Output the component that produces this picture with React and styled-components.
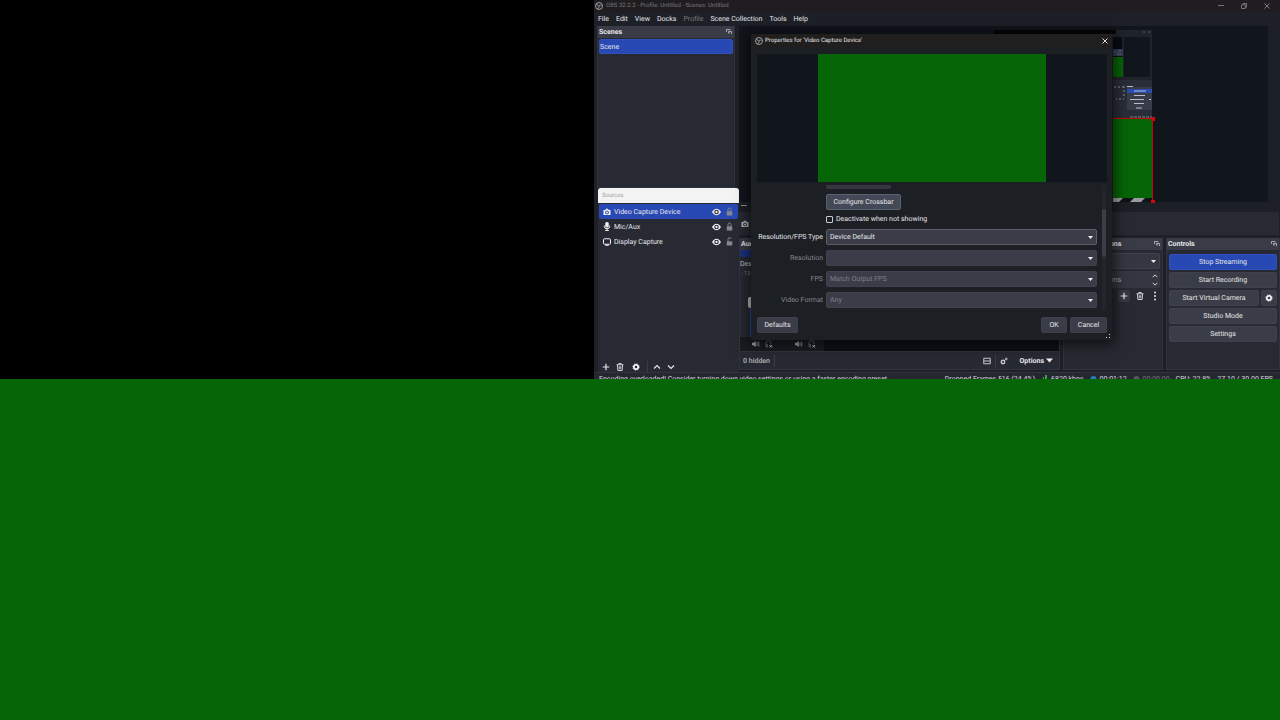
import React from "react";
import styled, { createGlobalStyle } from "styled-components";

const Global = createGlobalStyle`
  *, *::before, *::after { box-sizing: border-box; }
  body { margin: 0; background: #066506; text-rendering: geometricPrecision; }
  body, button, input, select {
    font-family: Roboto, "Open Sans", sans-serif;
    font-size: 7px;
    line-height: 10px;
    color: #e6e6ea;
    text-rendering: geometricPrecision;
  }
  h1, h2, p, ul { margin: 0; padding: 0; font-size: 7px; line-height: 10px; }
  ul { list-style: none; }
`;

const Page = styled.div`
  min-height: 100vh;
  display: flex;
  flex-direction: column;
  background: #066506;
`;

const Desktop = styled.div`
  display: grid;
  grid-template-columns: minmax(0, 594fr) minmax(686px, 686fr);
  background: #000;
`;

const Window = styled.main`
  grid-column: 2;
  position: relative;
  display: flex;
  flex-direction: column;
  background: #1d2026;
  overflow: hidden;
`;

const TitleBar = styled.header`
  display: flex;
  align-items: center;
  height: 12px;
  padding: 0 9px 0 1px;
  gap: 3px;
  background: #1f1d1f;
  color: #77767a;
`;

const WindowTitle = styled.h1`
  flex: 1;
  font-weight: 400;
  font-size: 6px;
`;

const WindowButtons = styled.div`
  display: flex;
  gap: 15px;
`;

const IconButton = styled.button`
  display: inline-flex;
  align-items: center;
  justify-content: center;
  flex: none;
  width: ${(p) => p.$w || 8}px;
  height: ${(p) => p.$h || 8}px;
  padding: 0;
  border: 0;
  border-radius: 2px;
  background: ${(p) => p.$bg || "transparent"};
  color: ${(p) => p.$color || "#e6e6ea"};
`;

const MenuBar = styled.nav`
  display: flex;
  align-items: center;
  height: 13px;
  padding-left: 4px;
  gap: 7px;
`;

const MenuItem = styled.button`
  padding: 0;
  border: 0;
  background: none;
  color: #e6e6ea;
  &:disabled { color: #77797f; }
`;

const Workspace = styled.div`
  display: flex;
  height: 347px;
`;

const LeftColumn = styled.div`
  flex: none;
  width: 145px;
  padding: 1px 0 0 3px;
`;

const RightColumn = styled.div`
  flex: 1;
  min-width: 0;
  display: flex;
  flex-direction: column;
`;

const Dock = styled.section`
  display: flex;
  flex-direction: column;
  min-width: 0;
  flex: ${(p) => p.$flex || "none"};
  background: #272a32;
  border: 1px solid #30333c;
  border-top: 0;
  overflow: hidden;
`;

const ScenesDock = styled(Dock)`
  width: 138px;
  height: 162px;
`;

const SourcesDock = styled(Dock)`
  width: 141px;
  height: 184px;
  margin-left: 1px;
  border: 0;
  border-radius: 3px 3px 0 0;
`;

const DockHeader = styled.header`
  display: flex;
  flex: none;
  align-items: center;
  justify-content: space-between;
  height: 12px;
  padding: 0 2px 0 1px;
  background: #393c46;
`;

const DockTitle = styled.h2`
  font-weight: 700;
  font-size: 7px;
  white-space: nowrap;
`;

const FloatingHeader = styled.header`
  display: flex;
  flex: none;
  align-items: center;
  height: 15px;
  padding-left: 4px;
  background: #f3f3f4;
  color: #a3a3a5;
  h2 { font-weight: 400; font-size: 6px; }
`;

const List = styled.ul`
  flex: 1;
  padding: 1px;
`;

const Item = styled.li`
  display: flex;
  align-items: center;
  height: 15px;
  padding: 0 5px 0 4px;
  gap: 3px;
  background: ${(p) => (p.$selected ? "#2848b4" : "transparent")};
  border-radius: 2px;
`;

const SceneItem = styled(Item)`
  padding-left: 0;
  border: 1px solid #3250bc;
`;

const ItemName = styled.span`
  flex: 1;
`;

const ItemActions = styled.span`
  display: flex;
  align-items: center;
  gap: 5px;
`;

const Toolbar = styled.div`
  display: flex;
  align-items: center;
  flex: none;
  height: 11px;
  padding: 0 3px;
  gap: 4px;
`;

const Divider = styled.span`
  width: 1px;
  height: 12px;
  background: #3a3d46;
`;

const Preview = styled.div`
  height: 186px;
  padding: 1px 12px 0 0;
  display: flex;
  flex-direction: column;
  background: #1c1f25;
`;

const PreviewCanvas = styled.div`
  flex: 1;
  display: flex;
  justify-content: flex-end;
  padding-right: 114px;
  background: #11151c;
`;

const ZoomBar = styled.div`
  display: flex;
  height: 9px;
  padding-left: 1px;
`;

const ContextBar = styled.div`
  display: flex;
  align-items: center;
  height: 23px;
  margin: 1px 1px 3px 0;
  padding-left: 2px;
  background: #272a32;
`;

const DockRow = styled.div`
  display: flex;
  flex: 1;
  gap: 3px;
  min-height: 0;
  padding-bottom: 2px;
`;

const MixerBody = styled.div`
  flex: 1;
  display: flex;
  flex-direction: column;
`;

const MixerTab = styled.div`
  height: 7px;
  background: #1d3180;
`;

const MixerName = styled.p`
  padding-top: 2px;
  color: #c4c5ca;
  white-space: nowrap;
`;

const MixerLevel = styled.p`
  flex: 1;
  padding-left: 2px;
  color: #777a83;
  font-size: 6px;
`;

const Fader = styled.div`
  display: flex;
  flex-direction: column;
  align-items: center;
  width: 22px;
  height: 40px;
`;

const FaderKnob = styled.span`
  width: 6px;
  height: 11px;
  border-radius: 2px;
  background: #c6c7cc;
`;

const FaderTrack = styled.span`
  width: 2px;
  flex: 1;
  background: #284cb8;
`;

const MuteRow = styled.div`
  display: flex;
  align-items: center;
  height: 14px;
  padding-left: 12px;
  gap: 5px;
  color: #a0a1a7;
  background: #191c21;
`;

const MuteGap = styled.span`
  width: 12px;
`;

const MeterEnd = styled.span`
  flex: 1;
  align-self: stretch;
  margin-left: 3px;
  background: #0e1115;
`;

const MixerFooter = styled.footer`
  display: flex;
  align-items: center;
  height: 18px;
  padding: 0 6px 0 3px;
  gap: 4px;
  border-top: 1px solid #30333c;
  color: #aaabb0;
  font-weight: 600;
`;

const Spacer = styled.span`
  flex: 1;
`;

const OptionsButton = styled.button`
  display: flex;
  align-items: center;
  gap: 2px;
  padding: 0;
  border: 0;
  background: none;
  font-weight: 700;
  margin-left: 8px;
`;

const TransitionBody = styled.div`
  display: flex;
  flex-direction: column;
  gap: 2px;
  padding: 3px 2px;
`;

const TransitionTools = styled.div`
  display: flex;
  align-items: center;
  justify-content: flex-end;
  gap: 5px;
`;

const ControlBody = styled.div`
  display: flex;
  flex-direction: column;
  gap: 2px;
  padding: 4px 2px;
`;

const ControlRow = styled.div`
  display: flex;
  gap: 2px;
`;

const Button = styled.button`
  flex: ${(p) => (p.$grow ? "1" : "none")};
  display: flex;
  align-items: center;
  justify-content: center;
  width: ${(p) => (p.$w ? p.$w + "px" : "auto")};
  height: 16px;
  padding: 0;
  border: 1px solid ${(p) => (p.$active ? "#2f50be" : p.$light ? "#596070" : "#3e414c")};
  border-radius: 2px;
  background: ${(p) => (p.$active ? "#2848b4" : p.$light ? "#434956" : "#3a3d47")};
`;

const StatusBar = styled.footer`
  display: flex;
  height: 7px;
  padding: 1px 7px 0 5px;
  overflow: hidden;
  white-space: nowrap;
  background: #24272e;
  border-top: 1px solid #30333c;
`;

const StatusItem = styled.span`
  display: flex;
  gap: 3px;
  margin-left: ${(p) => p.$gap || 0}px;
  color: ${(p) => (p.$dim ? "#777a80" : "#dcdde0")};
  svg { flex: none; }
`;

const Backdrop = styled.section`
  flex: 1;
  min-height: 341px;
  background: #066506;
`;

const Dialog = styled.section`
  position: absolute;
  top: 34px;
  right: 168px;
  width: 361px;
  display: flex;
  flex-direction: column;
  background: #1c1f24;
  box-shadow: 0 2px 12px 3px rgba(0, 0, 0, 0.6);
`;

const DialogTitle = styled.header`
  display: flex;
  align-items: center;
  height: 13px;
  padding: 0 3px 0 4px;
  gap: 2px;
  background: #201f1e;
  h2 { flex: 1; font-weight: 400; font-size: 6px; }
`;

const DevicePreview = styled.div`
  display: flex;
  justify-content: center;
  height: 128px;
  margin: 7px 5px 3px 6px;
  background: #11151c;
`;

const DeviceFrame = styled.div`
  width: 228px;
  background: #066506;
`;

const FormArea = styled.div`
  display: flex;
  height: 125px;
  padding: 0 6px;
`;

const Form = styled.form`
  flex: 1;
  display: flex;
  flex-direction: column;
`;

const Indent = styled.div`
  display: flex;
  align-items: center;
  padding-left: 69px;
  margin-bottom: ${(p) => p.$after}px;
`;

const CutButton = styled.span`
  width: 65px;
  height: 4px;
  border-radius: 0 0 2px 2px;
  background: #343741;
`;

const CheckLabel = styled.label`
  display: flex;
  align-items: center;
  gap: 3px;
`;

const CheckBox = styled.input`
  appearance: none;
  width: 7px;
  height: 7px;
  margin: 0;
  border: 1px solid #c8cbd2;
  border-radius: 1px;
`;

const Fields = styled.div`
  display: flex;
  flex-direction: column;
  gap: 5px;
`;

const Field = styled.div`
  display: grid;
  grid-template-columns: 66px 1fr;
  gap: 3px;
  align-items: center;
`;

const FieldLabel = styled.label`
  text-align: right;
  white-space: nowrap;
  color: ${(p) => (p.$dim ? "#85878d" : "#e6e6ea")};
`;

const SelectWrap = styled.div`
  position: relative;
  display: flex;
  svg { position: absolute; right: 4px; top: 6px; pointer-events: none; }
`;

const Select = styled.select`
  appearance: none;
  flex: 1;
  height: 16px;
  padding: 0 3px;
  border: 1px solid ${(p) => (p.disabled || p.$flat ? "#3f424d" : "#5a5d68")};
  border-radius: 2px;
  background: ${(p) => (p.$flat ? "#343741" : "#3a3d47")};
  opacity: 1;
  &:disabled { color: #7c7f88; }
`;

const SpinWrap = styled.div`
  display: flex;
  height: 17px;
  border-radius: 2px;
  background: #343741;
`;

const SpinInput = styled.input`
  flex: 1;
  min-width: 0;
  border: 0;
  background: none;
  color: #a0a1a7;
  padding: 0 2px 0 32px;
`;

const SpinButtons = styled.div`
  display: flex;
  flex-direction: column;
  justify-content: center;
  padding-right: 1px;
`;

const ScrollTrack = styled.div`
  width: 4px;
  margin-left: 5px;
  padding-top: 24px;
  background: #22252b;
`;

const ScrollThumb = styled.div`
  height: 48px;
  border-radius: 2px;
  background: #3b3e48;
`;

const DialogFooter = styled.footer`
  display: flex;
  gap: 3px;
  padding: 7px 5px 0 6px;
`;

const Grip = styled.div`
  display: flex;
  justify-content: flex-end;
  height: 7px;
  padding: 1px 1px 0 0;
`;

const Logo = () => (
  <svg width="8" height="8" viewBox="0 0 16 16" fill="none" stroke="#dedee2" strokeWidth="1.3">
    <circle cx="8" cy="8" r="7" />
    <path d="M4 3.5c-.2 2.4 1 4 3.3 4.3M12.8 7c-2-1.4-4-1-5 1M5 13c2.4-.6 3.8-2.4 3-5" />
  </svg>
);
const Popout = () => (
  <svg width="6" height="6" viewBox="0 0 12 12" fill="none" stroke="#bfc0c6" strokeWidth="1.600">
    <path d="M1 6V1h7v2M5 5h6v5M5 5v3h3" />
  </svg>
);
const Eye = () => (
  <svg width="9" height="8" viewBox="0 0 18 16">
    <path d="M0 8C3 3 6 1.500 9 1.500S15 3 18 8c-3 5-6 6.500-9 6.500S3 13 0 8Z" fill="#f0f0f4" />
    <circle cx="9" cy="8" r="4.500" fill="#272a32" />
    <circle cx="9" cy="8" r="2.300" fill="#f0f0f4" />
  </svg>
);
const Lock = ({ open }) => (
  <svg width="7" height="9" viewBox="0 0 14 18">
    <path d={open ? "M4 9V5a3 3 0 0 1 6-1" : "M4 9V5a3 3 0 0 1 6 0v4"} fill="none" stroke="#85878f" strokeWidth="2" />
    <rect x="1.500" y="8.500" width="11" height="8.500" rx="1" fill="#85878f" />
  </svg>
);
const Camera = ({ color = "#f0f0f4", hole = "#2848b4" }) => (
  <svg width="8" height="8" viewBox="0 0 16 16">
    <path d="M1 4h3.500l1.500-2.500h4L11.500 4H15v10H1Z" fill={color} />
    <circle cx="8" cy="8.800" r="3.700" fill={hole} />
    <circle cx="8" cy="8.800" r="2" fill={color} />
  </svg>
);
const Mic = () => (
  <svg width="8" height="9" viewBox="0 0 16 18" fill="#f0f0f4">
    <rect x="4.500" y="0" width="7" height="11" rx="3" />
    <path d="M2.500 7v1.500a5.500 5 0 0 0 11 0V7M8 13v4M4.500 17h7" fill="none" stroke="#f0f0f4" strokeWidth="2" />
  </svg>
);
const Monitor = () => (
  <svg width="8" height="8" viewBox="0 0 16 16">
    <rect x="1" y="1.500" width="14" height="11" rx="2" fill="none" stroke="#f0f0f4" strokeWidth="2" />
    <path d="M4.500 13h7v2.500h-7Z" fill="#f0f0f4" />
  </svg>
);
const Plus = () => (
  <svg width="8" height="8" viewBox="0 0 16 16" stroke="currentColor" strokeWidth="2.400">
    <path d="M8 1.500v13M1.500 8h13" />
  </svg>
);
const Trash = () => (
  <svg width="8" height="8" viewBox="0 0 16 16" fill="none" stroke="#d0d1d6" strokeWidth="2">
    <path d="M1 3.500h14M5.500 3V1h5v2M3 4l.7 11h8.600L13 4M6.500 6.500v6M9.500 6.500v6" />
  </svg>
);
const Gear = () => (
  <svg width="8" height="8" viewBox="0 0 16 16">
    <circle cx="8" cy="8" r="4.300" fill="none" stroke="#f0f0f4" strokeWidth="3.600" />
    <circle cx="8" cy="8" r="6.400" fill="none" stroke="#f0f0f4" strokeWidth="1.800" strokeDasharray="2.500 2.530" />
  </svg>
);
const Chevron = ({ up, size = 8 }) => (
  <svg width={size} height={size} viewBox="0 0 16 16" fill="none" stroke="#e6e6ea" strokeWidth="2.400">
    <path d={up ? "M2 11l6-6 6 6" : "M2 5l6 6 6-6"} />
  </svg>
);
const Triangle = ({ size = 5 }) => (
  <svg width={size} height={size} viewBox="0 0 10 10" fill="#f0f0f4">
    <path d="M0 2h10L5 8Z" />
  </svg>
);
const Close = ({ color }) => (
  <svg width="6" height="6" viewBox="0 0 12 12" stroke={color} strokeWidth="1.800">
    <path d="M1 1l10 10M11 1 1 11" />
  </svg>
);
const Minimise = ({ color = "#88888c" }) => (
  <svg width="6" height="6" viewBox="0 0 12 12" stroke={color} strokeWidth="1.600">
    <path d="M0 5h12" />
  </svg>
);
const Restore = () => (
  <svg width="6" height="6" viewBox="0 0 12 12" fill="none" stroke="#88888c" strokeWidth="1.600">
    <path d="M1 3.500h7.500V11H1ZM4 3V1h7v7.500H9" />
  </svg>
);
const Speaker = () => (
  <svg width="8" height="8" viewBox="0 0 16 16" fill="#b0b1b6">
    <path d="M0 5.500h3L7.500 2v12L3 10.500H0Z" />
    <path d="M10 4.500v7M13.500 3v10" stroke="#b0b1b6" strokeWidth="1.600" />
  </svg>
);
const Monitoring = () => (
  <svg width="8" height="8" viewBox="0 0 16 16" fill="none" stroke="#888a91" strokeWidth="1.300">
    <path d="M2 14V6a5 5 0 0 1 10 0v2M2 9h3v5H2" />
    <path d="M9 10l5 5M14 10l-5 5" stroke="#c8c9ce" strokeWidth="2" />
  </svg>
);
const Dots = () => (
  <svg width="4" height="10" viewBox="0 0 8 20" fill="#e6e6ea">
    <circle cx="4" cy="3" r="2" />
    <circle cx="4" cy="10" r="2" />
    <circle cx="4" cy="17" r="2" />
  </svg>
);
const LayoutIcon = () => (
  <svg width="8" height="8" viewBox="0 0 16 16" fill="none" stroke="#c8c9ce" strokeWidth="2">
    <path d="M1.500 2.500h13v11h-13ZM1.500 8h13" />
  </svg>
);
const Gears = () => (
  <svg width="8" height="8" viewBox="0 0 16 16" fill="none" stroke="#c8c9ce">
    <circle cx="6" cy="10" r="3.500" strokeWidth="2.800" />
    <circle cx="12.500" cy="4" r="1.800" strokeWidth="2" />
  </svg>
);
const Bars = () => (
  <svg width="7" height="8" viewBox="0 0 7 8" fill="#3ba63b">
    <path d="M0 5h1v3H0ZM2 3h1v5H2ZM4 1h2v7H4Z" />
  </svg>
);
const StreamDot = ({ color }) => (
  <svg width="7" height="8" viewBox="0 0 7 8">
    <circle cx="3.500" cy="5" r="3" fill={color} />
  </svg>
);

/* The captured desktop inside the preview, with the selected source outlined. */
const CapturedScene = () => (
  <svg width="162" height="176" viewBox="992 26 162 176" overflow="visible">
    <path d="M994 30h158v172H994Z" fill="#20232a" />
    <path d="M994 30h122v4H994Z" fill="#050607" />
    <path d="M1113 37h9v20h-9Z" fill="#080b10" />
    <path d="M1113 49h10v7h-10Z" fill="#333d54" />
    <path d="M1114 52h2M1118 51h3M1117 54h4" stroke="#626c80" strokeWidth="1" />
    <path d="M1113 57h10v20h-10Z" fill="#066506" />
    <path d="M1124 37h26v40h-26Z" fill="#11151c" />
    <path d="M1143 32h2M1148 32h2" stroke="#5b5d64" strokeWidth="1" />
    <path d="M1113 80h39v38h-39Z" fill="#292d38" />
    <path d="M1127 87h25v23h-25Z" fill="#383c48" />
    <path d="M1127 89h25v4h-25Z" fill="#2d4aaf" />
    <path d="M1127 86.500h6M1134 91h12M1134 95.500h11M1130 99.500h14M1134 103.500h10M1136 108h6M1149 99.500h2" stroke="#b9bdca" strokeWidth="1" />
    <path d="M1114 87h2M1118 87h2M1122 87h3M1123 91h2M1123 95h2M1116 99h1M1119 99h2M1123 99h1" stroke="#8d93a3" strokeWidth="1" />
    <path d="M1130 117h22" stroke="#7e838e" strokeWidth="1" strokeDasharray="3 1" />
    <path d="M1113 118h40v80h-40Z" fill="#066506" />
    <path d="M1113 198h40v4h-40Z" fill="#111216" />
    <path d="M1113 198h10l-4 4h-6ZM1134 198h11l-4 4h-11Z" fill="#9a9b9c" />
    <path d="M1113 118.500h39.500V202" fill="none" stroke="#c40808" strokeWidth="1" />
    <path d="M1151 117h4v4h-4ZM1151 200h4v3h-4Z" fill="#d3080f" />
  </svg>
);

const SOURCES = [
  { name: "Video Capture Device", icon: <Camera />, selected: true },
  { name: "Mic/Aux", icon: <Mic /> },
  { name: "Display Capture", icon: <Monitor />, open: true },
];

const FIELDS = [
  { id: "type", label: "Resolution/FPS Type", value: "Device Default" },
  { id: "resolution", label: "Resolution", value: "", disabled: true },
  { id: "fps", label: "FPS", value: "Match Output FPS", disabled: true },
  { id: "format", label: "Video Format", value: "Any", disabled: true },
];

const PropertiesDialog = () => (
  <Dialog role="dialog" aria-labelledby="dialog-title">
    <DialogTitle>
      <Logo />
      <h2 id="dialog-title">Properties for 'Video Capture Device'</h2>
      <IconButton aria-label="Close dialog"><Close color="#f0f0f4" /></IconButton>
    </DialogTitle>
    <DevicePreview><DeviceFrame /></DevicePreview>
    <FormArea>
      <Form>
        <Indent $after={5}><CutButton /></Indent>
        <Indent $after={4}><Button type="button" $w={75} $light>Configure Crossbar</Button></Indent>
        <Indent $after={5}>
          <CheckLabel><CheckBox type="checkbox" />Deactivate when not showing</CheckLabel>
        </Indent>
        <Fields>
          {FIELDS.map((f) => (
            <Field key={f.id}>
              <FieldLabel htmlFor={f.id} $dim={f.disabled}>{f.label}</FieldLabel>
              <SelectWrap>
                <Select id={f.id} disabled={f.disabled}><option>{f.value}</option></Select>
                <Triangle />
              </SelectWrap>
            </Field>
          ))}
        </Fields>
      </Form>
      <ScrollTrack><ScrollThumb /></ScrollTrack>
    </FormArea>
    <DialogFooter>
      <Button $w={41}>Defaults</Button>
      <Spacer />
      <Button $w={26}>OK</Button>
      <Button $w={37}>Cancel</Button>
    </DialogFooter>
    <Grip>
      <svg width="5" height="5" viewBox="0 0 5 5" fill="#c8c9ce">
        <path d="M3 0h1v1H3ZM3 3h1v1H3ZM0 3h1v1H0Z" />
      </svg>
    </Grip>
  </Dialog>
);

export default function App() {
  return (
    <Page>
      <Global />
      <Desktop>
        <Window>
          <TitleBar>
            <Logo />
            <WindowTitle>OBS 32.2.2 - Profile: Untitled - Scenes: Untitled</WindowTitle>
            <WindowButtons>
              <IconButton aria-label="Minimise"><Minimise /></IconButton>
              <IconButton aria-label="Restore"><Restore /></IconButton>
              <IconButton aria-label="Close"><Close color="#88888c" /></IconButton>
            </WindowButtons>
          </TitleBar>
          <MenuBar>
            {["File", "Edit", "View", "Docks", "Profile", "Scene Collection", "Tools", "Help"].map((m) => (
              <MenuItem key={m} disabled={m === "Profile"}>{m}</MenuItem>
            ))}
          </MenuBar>
          <Workspace>
            <LeftColumn>
              <ScenesDock>
                <DockHeader><DockTitle>Scenes</DockTitle><Popout /></DockHeader>
                <List><SceneItem $selected>Scene</SceneItem></List>
              </ScenesDock>
              <SourcesDock>
                <FloatingHeader><h2>Sources</h2></FloatingHeader>
                <List>
                  {SOURCES.map((s) => (
                    <Item key={s.name} $selected={s.selected}>
                      {s.icon}
                      <ItemName>{s.name}</ItemName>
                      <ItemActions><Eye /><Lock open={s.open} /></ItemActions>
                    </Item>
                  ))}
                </List>
                <Toolbar>
                  <IconButton aria-label="Add source" $w={10}><Plus /></IconButton>
                  <IconButton aria-label="Remove source" $w={10}><Trash /></IconButton>
                  <IconButton aria-label="Source properties" $w={14}><Gear /></IconButton>
                  <Divider />
                  <IconButton aria-label="Move up" $w={10}><Chevron up /></IconButton>
                  <IconButton aria-label="Move down" $w={10}><Chevron /></IconButton>
                </Toolbar>
              </SourcesDock>
            </LeftColumn>
            <RightColumn>
              <Preview>
                <PreviewCanvas><CapturedScene /></PreviewCanvas>
                <ZoomBar>
                  <IconButton aria-label="Zoom out"><Minimise color="#b4b5ba" /></IconButton>
                </ZoomBar>
              </Preview>
              <ContextBar><Camera color="#b4b5ba" hole="#272a32" /></ContextBar>
              <DockRow>
                <Dock $flex="1">
                  <DockHeader><DockTitle>Audio Mixer</DockTitle></DockHeader>
                  <MixerBody>
                    <MixerTab />
                    <MixerName>Desktop Audio</MixerName>
                    <MixerLevel>-13.4</MixerLevel>
                    <Fader><FaderKnob /><FaderTrack /></Fader>
                    <MuteRow>
                      <Speaker /><Monitoring /><MuteGap /><Speaker /><Monitoring />
                      <MeterEnd />
                    </MuteRow>
                  </MixerBody>
                  <MixerFooter>
                    <span>0 hidden</span>
                    <Divider />
                    <Spacer />
                    <LayoutIcon />
                    <Divider />
                    <Gears />
                    <OptionsButton>Options <Triangle size={7} /></OptionsButton>
                  </MixerFooter>
                </Dock>
                <Dock $flex="0 0 100px">
                  <DockHeader><DockTitle>Scene Transitions</DockTitle><Popout /></DockHeader>
                  <TransitionBody>
                    <SelectWrap>
                      <Select $flat aria-label="Transition"><option>Fade</option></Select>
                      <Triangle />
                    </SelectWrap>
                    <SpinWrap>
                      <SpinInput aria-label="Duration" defaultValue="300 ms" />
                      <SpinButtons>
                        <IconButton aria-label="Increase duration"><Chevron up size={6} /></IconButton>
                        <IconButton aria-label="Decrease duration"><Chevron size={6} /></IconButton>
                      </SpinButtons>
                    </SpinWrap>
                    <TransitionTools>
                      <IconButton aria-label="Add transition" $w={12} $h={12} $bg="#343741"><Plus /></IconButton>
                      <IconButton aria-label="Remove transition" $w={10}><Trash /></IconButton>
                      <IconButton aria-label="Transition menu" $w={10} $h={10}><Dots /></IconButton>
                    </TransitionTools>
                  </TransitionBody>
                </Dock>
                <Dock $flex="0 0 114px">
                  <DockHeader><DockTitle>Controls</DockTitle><Popout /></DockHeader>
                  <ControlBody>
                    <Button $active>Stop Streaming</Button>
                    <Button>Start Recording</Button>
                    <ControlRow>
                      <Button $grow>Start Virtual Camera</Button>
                      <Button $w={16} aria-label="Virtual camera settings"><Gear /></Button>
                    </ControlRow>
                    <Button>Studio Mode</Button>
                    <Button>Settings</Button>
                  </ControlBody>
                </Dock>
              </DockRow>
            </RightColumn>
          </Workspace>
          <StatusBar>
            <StatusItem>Encoding overloaded! Consider turning down video settings or using a faster encoding preset.</StatusItem>
            <Spacer />
            <StatusItem>Dropped Frames 516 (24.4%)</StatusItem>
            <StatusItem $gap={6}><Bars />6820 kbps</StatusItem>
            <StatusItem $gap={6}><StreamDot color="#2d79b8" />00:01:12</StatusItem>
            <StatusItem $gap={6} $dim><StreamDot color="#555860" />00:00:00</StatusItem>
            <StatusItem $gap={6}>CPU: 22.8%</StatusItem>
            <StatusItem $gap={6}>27.10 / 30.00 FPS</StatusItem>
          </StatusBar>
          <PropertiesDialog />
        </Window>
      </Desktop>
      <Backdrop aria-label="Captured screen" />
    </Page>
  );
}
